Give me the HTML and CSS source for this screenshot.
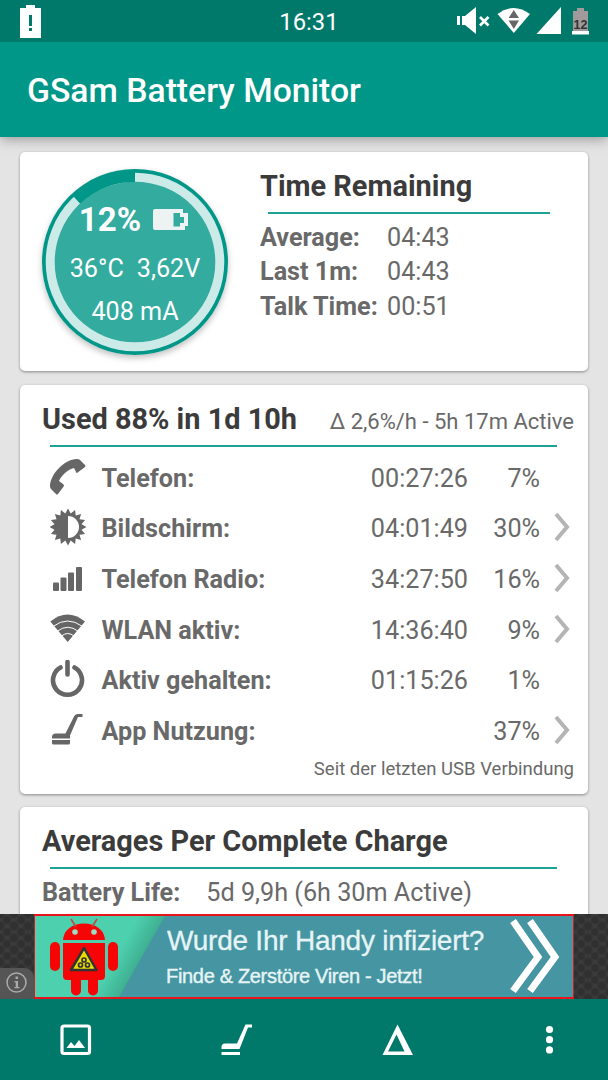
FILE: index.html
```
<!DOCTYPE html>
<html lang="de">

<head>
    <meta charset="UTF-8">
    <meta name="viewport" content="width=device-width, initial-scale=1.0">
    <title>GSam Battery Monitor</title>
    <link rel="stylesheet" href="styles.css">
</head>

<body>
    <div class="statusbar">
        <svg class="warn" width="22" height="34" viewBox="0 0 22 34">
            <path d="M6 0h9v3h6v30H0V3h6z" fill="#fff" />
            <path d="M9 10h3v11H9zM9 23h3v3H9z" fill="#00796b" />
        </svg>
        <span class="clock">16:31</span>
        <div class="signals">
            <svg width="168" height="42" viewBox="440 0 168 42">
                <path d="M457 16h3v9h-3zM462 16h3l11-9v27l-11-9h-3z" fill="#fff" />
                <path d="M480 17l8.500 8.500M488.500 17l-8.500 8.500" stroke="#fff" stroke-width="2.600" />
                <path d="M497.500 14Q513.500 2 530 14L513.800 33z" fill="#fff" />
                <path d="M513.800 10l5.200 8h-10.400zM513.800 29l5.200-8.500h-10.400z" fill="#666" />
                <path d="M561 7v27h-24.500z" fill="#fff" />
                <path d="M577 8h7v3h4v20h-15V11h4z" fill="#a09a9a" />
                <path d="M572 31h17v3.500h-17z" fill="#fff" />
                <text x="580.500" y="29" class="battnum">12</text>
            </svg>
        </div>
    </div>

    <div class="appbar">
        <h1>GSam Battery Monitor</h1>
    </div>

    <div class="content">
        <div class="card summary">
            <div class="gauge">
                <svg class="ring" width="186" height="186" viewBox="0 0 186 186">
                    <circle cx="93" cy="93" r="93" fill="#009688" />
                    <circle cx="93" cy="93" r="84.800" fill="#33ab9f" stroke="#cceae7" stroke-width="9" />
                    <path d="M93 8A85 85 0 0 0 34.800 31" fill="none" stroke="#009688" stroke-width="10" />
                </svg>
                <div class="level">
                    <b>12%</b>
                    <svg width="35" height="22" viewBox="0 0 35 22">
                        <path d="M2 0h28v4h5v13h-3v4H2q-2 0-2-2V2q0-2 2-2z" fill="#edf3f2" />
                        <path d="M20.500 4H27v4h4v6h-4v3.500h-6.500z" fill="#33ab9f" />
                    </svg>
                </div>
                <div class="temps"><span>36°C</span><span>3,62V</span></div>
                <div>408 mA</div>
            </div>
            <div class="remaining">
                <h2>Time Remaining</h2>
                <div class="line"></div>
                <div class="times">
                    <b>Average:</b><span>04:43</span>
                    <b>Last 1m:</b><span>04:43</span>
                    <b>Talk Time:</b><span>00:51</span>
                </div>
            </div>
        </div>

        <div class="card usage">
            <div class="head">
                <h2>Used 88% in 1d 10h</h2>
                <span>Δ 2,6%/h - 5h 17m Active</span>
            </div>
            <div class="line"></div>
            <div class="row">
                <svg width="36" height="38" viewBox="0 0 36 38">
                    <path d="M0 28C0 17 14 1 27 1q2 0 3 1l5 5q1 1 0 2l-8 6q-1 0-1-1l-2-4C18 11 11 18 9 23l4 3q1 1 1 2l-6 8q-1 1-2 0l-5-5q-1-1-1-3z" />
                </svg>
                <b>Telefon:</b><span>00:27:26</span><span>7%</span>
            </div>
            <div class="row">
                <svg width="36" height="38" viewBox="0 0 36 38">
                    <polygon id="sun" points="" />
                    <path d="M18 8a11 11 0 0 1 0 22z" fill="#fff" />
                </svg>
                <b>Bildschirm:</b><span>04:01:49</span><span>30%</span>
                <svg class="more" width="18" height="32" viewBox="0 0 18 32"><path d="M3 3l11 13L3 29" /></svg>
            </div>
            <div class="row">
                <svg width="36" height="38" viewBox="0 0 36 38">
                    <rect x="3" y="23.500" width="6" height="8.500" rx="1" />
                    <rect x="10.500" y="18.500" width="6" height="13.500" rx="1" />
                    <rect x="18" y="13.500" width="6" height="18.500" rx="1" />
                    <rect x="26" y="8" width="6" height="24" rx="1" />
                </svg>
                <b>Telefon Radio:</b><span>34:27:50</span><span>16%</span>
                <svg class="more" width="18" height="32" viewBox="0 0 18 32"><path d="M3 3l11 13L3 29" /></svg>
            </div>
            <div class="row">
                <svg width="36" height="38" viewBox="0 0 36 38">
                    <path d="M.300 11.500Q17.500-2.500 35 11.500L17.700 32z" />
                    <path d="M3 16.500q14.700-11 29.500 0M7 21.500q10.700-8.500 21.500 0M11.500 26q6.300-5 12.500 0" fill="none" stroke="#fff" stroke-width="1" />
                </svg>
                <b>WLAN aktiv:</b><span>14:36:40</span><span>9%</span>
                <svg class="more" width="18" height="32" viewBox="0 0 18 32"><path d="M3 3l11 13L3 29" /></svg>
            </div>
            <div class="row">
                <svg width="36" height="38" viewBox="0 0 36 38">
                    <path d="M10.500 7.500a14.500 14.500 0 1 0 14 0M17.500 2v12.500" fill="none" stroke="#666" stroke-width="4.600" stroke-linecap="round" />
                </svg>
                <b>Aktiv gehalten:</b><span>01:15:26</span><span>1%</span>
            </div>
            <div class="row">
                <svg width="36" height="38" viewBox="0 0 36 38">
                    <path d="M32.500 3V6H28L20 24.500v3H2V26q0-3.500 4-3.500h9.500L24 5.500q1-2.500 3.500-2.500zM2 29h18v3q0 1.500-1.500 1.500h-15Q2 33.500 2 32z" />
                </svg>
                <b>App Nutzung:</b><span></span><span>37%</span>
                <svg class="more" width="18" height="32" viewBox="0 0 18 32"><path d="M3 3l11 13L3 29" /></svg>
            </div>
            <p class="since">Seit der letzten USB Verbindung</p>
        </div>

        <div class="card averages">
            <div class="head">
                <h2>Averages Per Complete Charge</h2>
            </div>
            <div class="line"></div>
            <div class="life"><b>Battery Life:</b><span>5d 9,9h (6h 30m Active)</span></div>
        </div>
    </div>

    <div class="adbar">
        <div class="info">
            <svg width="21" height="21" viewBox="0 0 21 21">
                <circle cx="10.500" cy="10.500" r="9.500" fill="none" stroke="#aaa" stroke-width="1.500" />
                <path d="M9.500 4.500h2.500v2.500H9.500zM8.500 9H12v6h1.500v1.200h-5V15h1.200v-4.800H8.500z" fill="#aaa" />
            </svg>
        </div>
        <div class="ad">
            <svg class="robot" width="130" height="81" viewBox="0 0 130 81">
                <defs>
                    <linearGradient id="mint" gradientUnits="userSpaceOnUse" x1="84" y1="35" x2="109" y2="49">
                        <stop offset="0" stop-color="#4dd0ae" />
                        <stop offset="1" stop-color="#3ba88a" />
                    </linearGradient>
                </defs>
                <path d="M0 0h130L84 81H0z" fill="url(#mint)" />
                <g fill="#f50505">
                    <path d="M28 24C29 2 69 2 70 24z" />
                    <path d="M36 3l5 8M62 3l-5 8" stroke="#c3473a" stroke-width="1.500" />
                    <path d="M28 27h42v33q0 4-4 4H32q-4 0-4-4z" />
                    <rect x="15" y="26" width="10" height="29" rx="5" />
                    <rect x="73" y="26" width="10" height="29" rx="5" />
                    <rect x="36" y="54" width="10" height="25.500" rx="5" />
                    <rect x="53" y="54" width="10" height="25.500" rx="5" />
                </g>
                <circle cx="40" cy="16" r="2.800" fill="#9fdcc6" />
                <circle cx="59" cy="16" r="2.800" fill="#9fdcc6" />
                <path d="M49 32L61.500 54h-25.500z" fill="#e8dc00" stroke="#333" stroke-width="2.500" stroke-linejoin="round" />
                <g fill="none" stroke="#333" stroke-width="1.700">
                    <circle cx="49" cy="44" r="2" />
                    <circle cx="45.500" cy="49" r="2" />
                    <circle cx="52.500" cy="49" r="2" />
                </g>
            </svg>
            <div class="adtext">
                <div class="big">Wurde Ihr Handy infiziert?</div>
                <div class="small">Finde &amp; Zerstöre Viren - Jetzt!</div>
            </div>
            <svg class="arrows" width="54" height="81" viewBox="0 0 54 81">
                <path d="M5 5l25 36L5 75M22 5l25 36L22 75" />
            </svg>
        </div>
    </div>

    <div class="toolbar">
        <div>
            <svg width="32" height="32" viewBox="0 0 32 32">
                <rect x="2" y="2" width="27.500" height="27.500" rx="2" fill="none" stroke="#fff" stroke-width="3.200" />
                <path d="M6.500 24l4.500-6 3.500 4 4.500-6 6 8z" fill="#fff" />
            </svg>
        </div>
        <div>
            <svg width="32" height="32" viewBox="0 0 32 32">
                <path d="M24.500 .500H31v3h-4L18.500 25H.500v-2q0-3.500 3.500-3.500h12zM.500 28h18.500v3H.500z" fill="#fff" />
            </svg>
        </div>
        <div>
            <svg width="32" height="32" viewBox="0 0 32 32">
                <path fill-rule="evenodd" d="M15.500 .500L31 31H.500zM14.500 10.500L6 27.500h16.500z" fill="#fff" />
            </svg>
        </div>
        <div>
            <svg width="32" height="32" viewBox="0 0 32 32" fill="#fff">
                <circle cx="15.500" cy="5.500" r="3.600" />
                <circle cx="15.500" cy="15.700" r="3.600" />
                <circle cx="15.500" cy="25.900" r="3.600" />
            </svg>
        </div>
    </div>

    <script>
        //brightness icon, 16 spikes//
        var points = [];
        for (var i = 0; i < 32; i++) {
            var r = (i % 2 == 0) ? 18.5 : 13.8;
            var a = i * Math.PI / 16;
            points.push((18 + r * Math.sin(a)).toFixed(1) + "," + (19 - r * Math.cos(a)).toFixed(1));
        }
        document.getElementById("sun").setAttribute("points", points.join(" "));
    </script>
</body>

</html>
```

FILE: styles.css
```
* {
    box-sizing: border-box;
}

body {
    margin: 0;
    width: 608px;
    height: 1080px;
    display: flex;
    flex-direction: column;
    overflow: hidden;
    background: #e4e4e4;
    font-family: Roboto, sans-serif;
    font-size: 25.2px;
    color: #696969;
}

svg {
    display: block;
    flex: none;
}

h1, h2, p {
    margin: 0;
}

.statusbar {
    height: 42px;
    flex: none;
    display: grid;
    grid-template-columns: 1fr auto 1fr;
    align-items: center;
    background: #00796b;
    color: #fff;
    position: relative;
    z-index: 2;
}

.warn {
    margin: 2px 0 0 20px;
}

.clock {
    font-size: 23.8px;
    padding: 2px 0 0 10px;
}

.signals {
    justify-self: end;
}

.battnum {
    font: bold 12.5px "Liberation Sans", sans-serif;
    text-anchor: middle;
    fill: #333;
}

.appbar {
    height: 95px;
    flex: none;
    display: flex;
    align-items: center;
    padding: 1px 0 0 27px;
    background: #009688;
    color: #fff;
    box-shadow: 0 2px 12px rgba(0, 0, 0, 0.35);
    z-index: 1;
}

h1 {
    font-size: 33.7px;
    font-weight: 500;
}

.content {
    flex: 1;
    min-height: 0;
    overflow: hidden;
    display: flex;
    flex-direction: column;
    gap: 13px;
    padding: 15px 20px 0;
}

.card {
    flex: none;
    background: #fff;
    border-radius: 5px;
    box-shadow: 0 1px 3px rgba(0, 0, 0, 0.4);
    padding: 0 14px 0 22px;
}

h2 {
    font-size: 28.9px;
    line-height: 34px;
    font-weight: bold;
    color: #3b3b3b;
}

.line {
    height: 2px;
    background: #1fa296;
    margin: 0 17px 0 8px;
}

.summary {
    height: 219px;
    margin-bottom: 1px;
    display: flex;
    gap: 32px;
}

.gauge {
    position: relative;
    width: 186px;
    height: 186px;
    margin-top: 16.5px;
    padding-top: 29px;
    border-radius: 50%;
    box-shadow: 0 3px 6px rgba(0, 0, 0, 0.25);
    color: #fff;
    text-align: center;
    line-height: 43px;
}

.ring {
    position: absolute;
    top: 0;
    left: 0;
    z-index: 0;
}

.gauge div {
    position: relative;
}

.level {
    display: flex;
    justify-content: center;
    align-items: center;
    gap: 12px;
    height: 49px;
    padding: 0 3px 5px 0;
    font-size: 33px;
}

.temps {
    display: flex;
    justify-content: center;
    gap: 13px;
}

.remaining {
    flex: 1;
    padding-top: 17px;
}

.remaining .line {
    margin: 9px 24px 7px 8px;
}

.times {
    display: grid;
    grid-template-columns: 127px 1fr;
    line-height: 34.3px;
}

.usage {
    height: 409px;
}

.head {
    height: 60px;
    padding-top: 17px;
    display: flex;
    justify-content: space-between;
}

.head span {
    font-size: 22px;
    line-height: 39px;
}

.usage .line {
    margin-bottom: 6px;
}

.row {
    height: 50.6px;
    display: grid;
    grid-template-columns: 51.5px 1fr 100px 72px 34px;
    align-items: center;
    padding-left: 8px;
    fill: #666;
}

.row svg {
    margin-bottom: 3px;
}

.row span {
    text-align: right;
}

.row .more {
    justify-self: end;
    margin-right: 3px;
    fill: none;
    stroke: #b4b4b4;
    stroke-width: 4;
}

.since {
    text-align: right;
    font-size: 18.5px;
    line-height: 25px;
}

.averages {
    height: 150px;
}

.life {
    display: flex;
    gap: 26px;
    padding-top: 9px;
}

.adbar {
    position: relative;
    z-index: 1;
    height: 85px;
    flex: none;
    display: flex;
    justify-content: center;
    background-color: #333;
    background-image: radial-gradient(circle, #303030 35%, transparent 50%), radial-gradient(circle, #303030 35%, #3b3b3b 60%);
    background-size: 14px 12px;
    background-position: 0 0, 7px 6px;
}

.info {
    position: absolute;
    left: 0;
    bottom: 0;
    width: 34px;
    height: 31px;
    padding: 4px 0 0 6px;
    background: #555;
    border-radius: 0 10px 0 0;
}

.ad {
    width: 540px;
    display: flex;
    background: #4595a2;
    border: solid #e8141c;
    border-width: 2px 1px;
}

.adtext {
    flex: 1;
    color: #e6f4f5;
    font-family: "Liberation Sans", sans-serif;
    white-space: nowrap;
}

.big {
    font-size: 28px;
    line-height: 32px;
    padding-top: 9px;
    letter-spacing: -0.23px;
    margin-left: 2px;
    -webkit-text-stroke: 0.3px #e6f4f5;
}

.small {
    font-size: 20px;
    line-height: 24px;
    margin: 7px 0 0 1px;
    letter-spacing: -0.32px;
    -webkit-text-stroke: 0.4px #e6f4f5;
}

.arrows {
    margin-right: 11px;
    fill: none;
    stroke: #fff;
    stroke-width: 7;
}

.toolbar {
    height: 81px;
    flex: none;
    display: flex;
    align-items: center;
    background: #00796b;
    padding-top: 1px;
}

.toolbar div {
    width: 161px;
    display: flex;
    justify-content: center;
    flex: none;
}

.toolbar div:first-child {
    width: 151px;
    margin-right: 5px;
}

.toolbar div:last-child {
    width: 143px;
}
```
